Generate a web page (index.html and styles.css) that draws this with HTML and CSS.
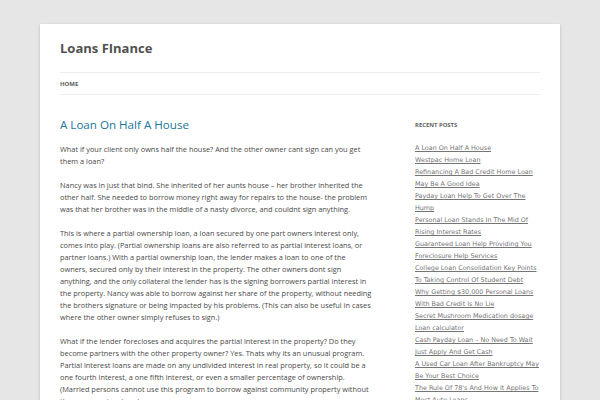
FILE: index.html
```html
<!DOCTYPE html>
<html lang="en">
<head>
<meta charset="utf-8">
<title>Loans FInance</title>
<link rel="stylesheet" href="styles.css">
</head>
<body>
<div class="site">
  <header class="site-header">
    <h1 class="site-title">Loans FInance</h1>
    <nav class="main-nav"><a href="#" class="nav-link">Home</a></nav>
  </header>
  <div class="site-main">
    <article class="content">
      <h2 class="entry-title">A Loan On Half A House</h2>
      <p>What if your client only owns half the house? And the other owner cant sign can you get them a loan?</p>
      <p>Nancy was in just that bind. She inherited of her aunts house – her brother inherited the other half. She needed to borrow money right away for repairs to the house- the problem was that her brother was in the middle of a nasty divorce, and couldnt sign anything.</p>
      <p>This is where a partial ownership loan, a loan secured by one part owners interest only, comes into play. (Partial ownership loans are also referred to as partial interest loans, or partner loans.) With a partial ownership loan, the lender makes a loan to one of the owners, secured only by their interest in the property. The other owners dont sign anything, and the only collateral the lender has is the signing borrowers partial interest in the property. Nancy was able to borrow against her share of the property, without needing the brothers signature or being impacted by his problems. (This can also be useful in cases where the other owner simply refuses to sign.)</p>
      <p>What if the lender forecloses and acquires the partial interest in the property? Do they become partners with the other property owner? Yes. Thats why its an unusual program. Partial interest loans are made on any undivided interest in real property, so it could be a one fourth interest, a one fifth interest, or even a smaller percentage of ownership. (Married persons cannot use this program to borrow against community property without the spouses signature.)</p>
    </article>
    <aside class="sidebar">
      <h3 class="widget-title">Recent Posts</h3>
      <ul class="post-list">
        <li><a href="#">A Loan On Half A House</a></li>
        <li><a href="#">Westpac Home Loan</a></li>
        <li><a href="#">Refinancing A Bad Credit Home Loan May Be A Good Idea</a></li>
        <li><a href="#">Payday Loan Help To Get Over The Hump</a></li>
        <li><a href="#">Personal Loan Stands In The Mid Of Rising Interest Rates</a></li>
        <li><a href="#">Guaranteed Loan Help Providing You Foreclosure Help Services</a></li>
        <li><a href="#">College Loan Consolidation Key Points To Taking Control Of Student Debt</a></li>
        <li><a href="#">Why Getting $30,000 Personal Loans With Bad Credit Is No Lie</a></li>
        <li><a href="#">Secret Mushroom Medication dosage Loan calculator</a></li>
        <li><a href="#">Cash Payday Loan – No Need To Wait Just Apply And Get Cash</a></li>
        <li><a href="#">A Used Car Loan After Bankruptcy May Be Your Best Choice</a></li>
        <li><a href="#">The Rule Of 78's And How It Applies To Most Auto Loans</a></li>
      </ul>
    </aside>
  </div>
</div>
</body>
</html>
```

FILE: styles.css
```css
html, body {
  margin: 0;
  padding: 0;
}
body {
  background: #e6e6e6;
  font-family: "Open Sans", "Liberation Sans", sans-serif;
  color: #444;
  height: 400px;
  overflow: hidden;
}
.site {
  width: 480px;
  margin: 24px auto 0;
  padding: 0 20px;
  background: #fff;
  box-shadow: 0 1px 3px rgba(100, 100, 100, 0.3);
  min-height: 400px;
}
.site-header {
  padding-top: 12px;
}
.site-title {
  margin: 0;
  font-size: 13px;
  line-height: 24px;
  font-weight: 700;
  color: #515151;
}
.main-nav {
  margin-top: 12px;
  height: 21px;
  border-top: 1px solid #ededed;
  border-bottom: 1px solid #ededed;
  display: flex;
  align-items: center;
}
.nav-link {
  font-size: 6px;
  font-weight: 700;
  text-transform: uppercase;
  color: #5e5e5e;
  text-decoration: none;
}
.site-main {
  display: flex;
  justify-content: space-between;
}
.content {
  width: 312px;
  padding-top: 23px;
}
.entry-title {
  margin: 0 0 11px;
  font-size: 11.6px;
  line-height: 14px;
  font-weight: 400;
  color: #21759b;
}
.content p {
  margin: 0 0 12px;
  font-size: 7.38px;
  line-height: 12px;
  color: #4a4a4a;
}
.sidebar {
  width: 125px;
  padding-top: 24px;
}
.widget-title {
  margin: 0 0 11px;
  font-size: 5.9px;
  line-height: 12px;
  font-weight: 700;
  text-transform: uppercase;
  color: #636363;
}
.post-list {
  list-style: none;
  margin: 0;
  padding: 0;
}
.post-list li {
  font-family: "DejaVu Sans", sans-serif;
  font-size: 6.4px;
  line-height: 12px;
}
.post-list a {
  color: #757575;
  text-decoration: underline;
}
```
